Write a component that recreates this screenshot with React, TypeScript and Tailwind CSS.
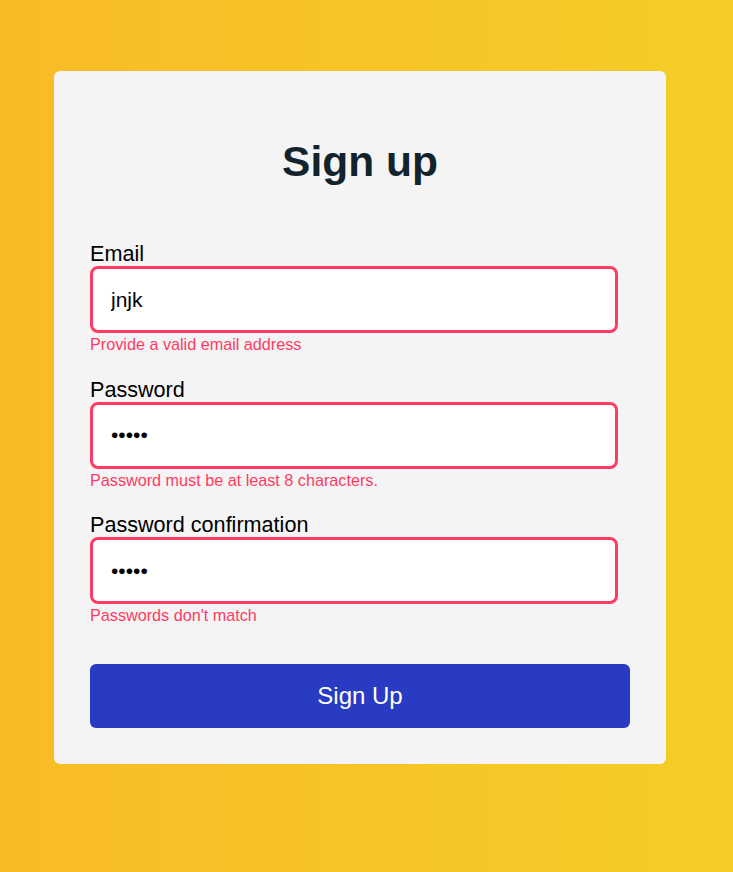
const fields = [
  { label: "Email", type: "text", value: "jnjk", error: "Provide a valid email address" },
  { label: "Password", type: "password", value: "12345", error: "Password must be at least 8 characters." },
  { label: "Password confirmation", type: "password", value: "12345", error: "Passwords don't match" },
];

export default function App() {
  return (
    <div
      className="min-h-[872px] w-full bg-gradient-to-r from-[#f9bb26] to-[#f5cd28] pt-[71px] pl-[54px]"
      style={{ fontFamily: '"Liberation Sans", Arial, sans-serif' }}
    >
      <div className="w-[612px] rounded-md bg-[#f4f4f4] px-[36px] pb-[36px] pt-[37px]">
        <h1 className="mt-[30px] text-center text-[42.5px] font-bold leading-[48px] text-[#13232c]">
          Sign up
        </h1>

        <form className="mt-[56px] flex flex-col" onSubmit={(e) => e.preventDefault()}>
          {fields.map((f, i) => (
            <div key={f.label} className={i === 0 ? "flex flex-col" : "mt-[24px] flex flex-col"}>
              <label className="text-[21.6px] leading-[24px] text-black">{f.label}</label>
              <input
                type={f.type}
                defaultValue={f.value}
                className="h-[67px] w-[528px] rounded-lg border-[3px] border-[#ff3b63] bg-white px-[18px] text-[21px] text-black outline-none"
              />
              <p className="mt-[2px] text-[16.2px] leading-[18.5px] text-[#ff3b63]">{f.error}</p>
            </div>
          ))}

          <button
            type="submit"
            className="mt-[39px] h-[64px] w-full rounded-md bg-[#283bc2] text-[24px] text-white"
          >
            Sign Up
          </button>
        </form>
      </div>
    </div>
  );
}
